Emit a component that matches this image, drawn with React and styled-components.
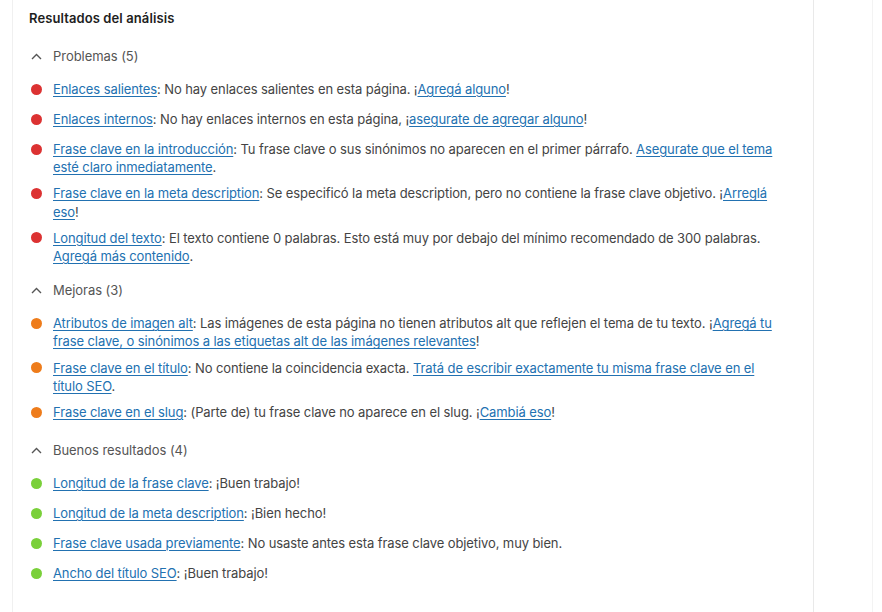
import React from 'react';
import styled, { createGlobalStyle } from 'styled-components';

const GlobalStyle = createGlobalStyle`
  body {
    margin: 0;
    background: #fff;
    font-family: Inter, "Noto Sans", "Liberation Sans", sans-serif;
    -webkit-font-smoothing: antialiased;
  }
`;

const Page = styled.div`
  display: flex;
  min-height: 612px;
  padding-left: 12px;
`;

const Panel = styled.section`
  width: 802px;
  box-sizing: border-box;
  border-left: 1px solid #f0f0f0;
  border-right: 1px solid #e9e9e9;
  padding: 9px 30px 0 16px;
`;

const SideStrip = styled.div`
  width: 58px;
  border-right: 1px solid #f3f3f3;
`;

const Title = styled.h2`
  margin: 0 0 20px;
  font-size: 13px;
  line-height: 18px;
  font-weight: 600;
  letter-spacing: 0.1px;
  color: #1e1e1e;
`;

const Group = styled.div`
  padding-bottom: 8px;
`;

const GroupHeader = styled.button`
  display: flex;
  align-items: center;
  padding: 0;
  margin: 0 0 15px;
  border: 0;
  background: none;
  font: inherit;
  font-size: 13px;
  line-height: 18px;
  letter-spacing: -0.05px;
  color: #555;
  cursor: pointer;
`;

const Lead = styled.span`
  display: flex;
  align-items: center;
  width: 22px;
  padding-left: 2px;
  flex-shrink: 0;
`;

const List = styled.ul`
  list-style: none;
  margin: 0;
  padding: 0;
`;

const Item = styled.li`
  display: flex;
  align-items: flex-start;
  min-height: 22px;
  margin-bottom: 8px;
`;

const Bullet = styled.span`
  display: block;
  width: 11px;
  height: 11px;
  margin-top: 3.5px;
  border-radius: 50%;
  background: ${p => p.$color};
`;

const Text = styled.p`
  margin: 0;
  font-size: 13px;
  line-height: 18.2px;
  letter-spacing: -0.1px;
  color: #444;
`;

const Link = styled.a`
  color: #2271b1;
  text-decoration: underline;
  text-underline-offset: 2px;
  text-decoration-thickness: 1px;
`;

const colors = { bad: '#dc3232', ok: '#ee7c1b', good: '#7ad03a' };

const Chevron = () => (
  <svg width="11" height="7" viewBox="0 0 11 7" fill="none">
    <path d="M1 6 L5.5 1.5 L10 6" stroke="#555" strokeWidth="1.4" />
  </svg>
);

const groups = [
  {
    label: 'Problemas (5)',
    tone: 'bad',
    items: [
      [<Link href="#">Enlaces salientes</Link>, ': No hay enlaces salientes en esta página. ¡', <Link href="#">Agregá alguno</Link>, '!'],
      [<Link href="#">Enlaces internos</Link>, ': No hay enlaces internos en esta página, ¡', <Link href="#">asegurate de agregar alguno</Link>, '!'],
      [<Link href="#">Frase clave en la introducción</Link>, ': Tu frase clave o sus sinónimos no aparecen en el primer párrafo. ', <Link href="#">Asegurate que el tema esté claro inmediatamente</Link>, '.'],
      [<Link href="#">Frase clave en la meta description</Link>, ': Se especificó la meta description, pero no contiene la frase clave objetivo. ¡', <Link href="#">Arreglá eso</Link>, '!'],
      [<Link href="#">Longitud del texto</Link>, ': El texto contiene 0 palabras. Esto está muy por debajo del mínimo recomendado de 300 palabras. ', <Link href="#">Agregá más contenido</Link>, '.'],
    ],
  },
  {
    label: 'Mejoras (3)',
    tone: 'ok',
    items: [
      [<Link href="#">Atributos de imagen alt</Link>, ': Las imágenes de esta página no tienen atributos alt que reflejen el tema de tu texto. ¡', <Link href="#">Agregá tu frase clave, o sinónimos a las etiquetas alt de las imágenes relevantes</Link>, '!'],
      [<Link href="#">Frase clave en el título</Link>, ': No contiene la coincidencia exacta. ', <Link href="#">Tratá de escribir exactamente tu misma frase clave en el título SEO</Link>, '.'],
      [<Link href="#">Frase clave en el slug</Link>, ': (Parte de) tu frase clave no aparece en el slug. ¡', <Link href="#">Cambiá eso</Link>, '!'],
    ],
  },
  {
    label: 'Buenos resultados (4)',
    tone: 'good',
    items: [
      [<Link href="#">Longitud de la frase clave</Link>, ': ¡Buen trabajo!'],
      [<Link href="#">Longitud de la meta description</Link>, ': ¡Bien hecho!'],
      [<Link href="#">Frase clave usada previamente</Link>, ': No usaste antes esta frase clave objetivo, muy bien.'],
      [<Link href="#">Ancho del título SEO</Link>, ': ¡Buen trabajo!'],
    ],
  },
];

export default function App() {
  return (
    <>
      <GlobalStyle />
      <Page>
        <Panel>
          <Title>Resultados del análisis</Title>
          {groups.map(group => (
            <Group key={group.label}>
              <GroupHeader type="button">
                <Lead><Chevron /></Lead>
                {group.label}
              </GroupHeader>
              <List>
                {group.items.map((parts, i) => (
                  <Item key={i}>
                    <Lead><Bullet $color={colors[group.tone]} /></Lead>
                    <Text>
                      {parts.map((part, j) => (
                        <React.Fragment key={j}>{part}</React.Fragment>
                      ))}
                    </Text>
                  </Item>
                ))}
              </List>
            </Group>
          ))}
        </Panel>
        <SideStrip />
      </Page>
    </>
  );
}
